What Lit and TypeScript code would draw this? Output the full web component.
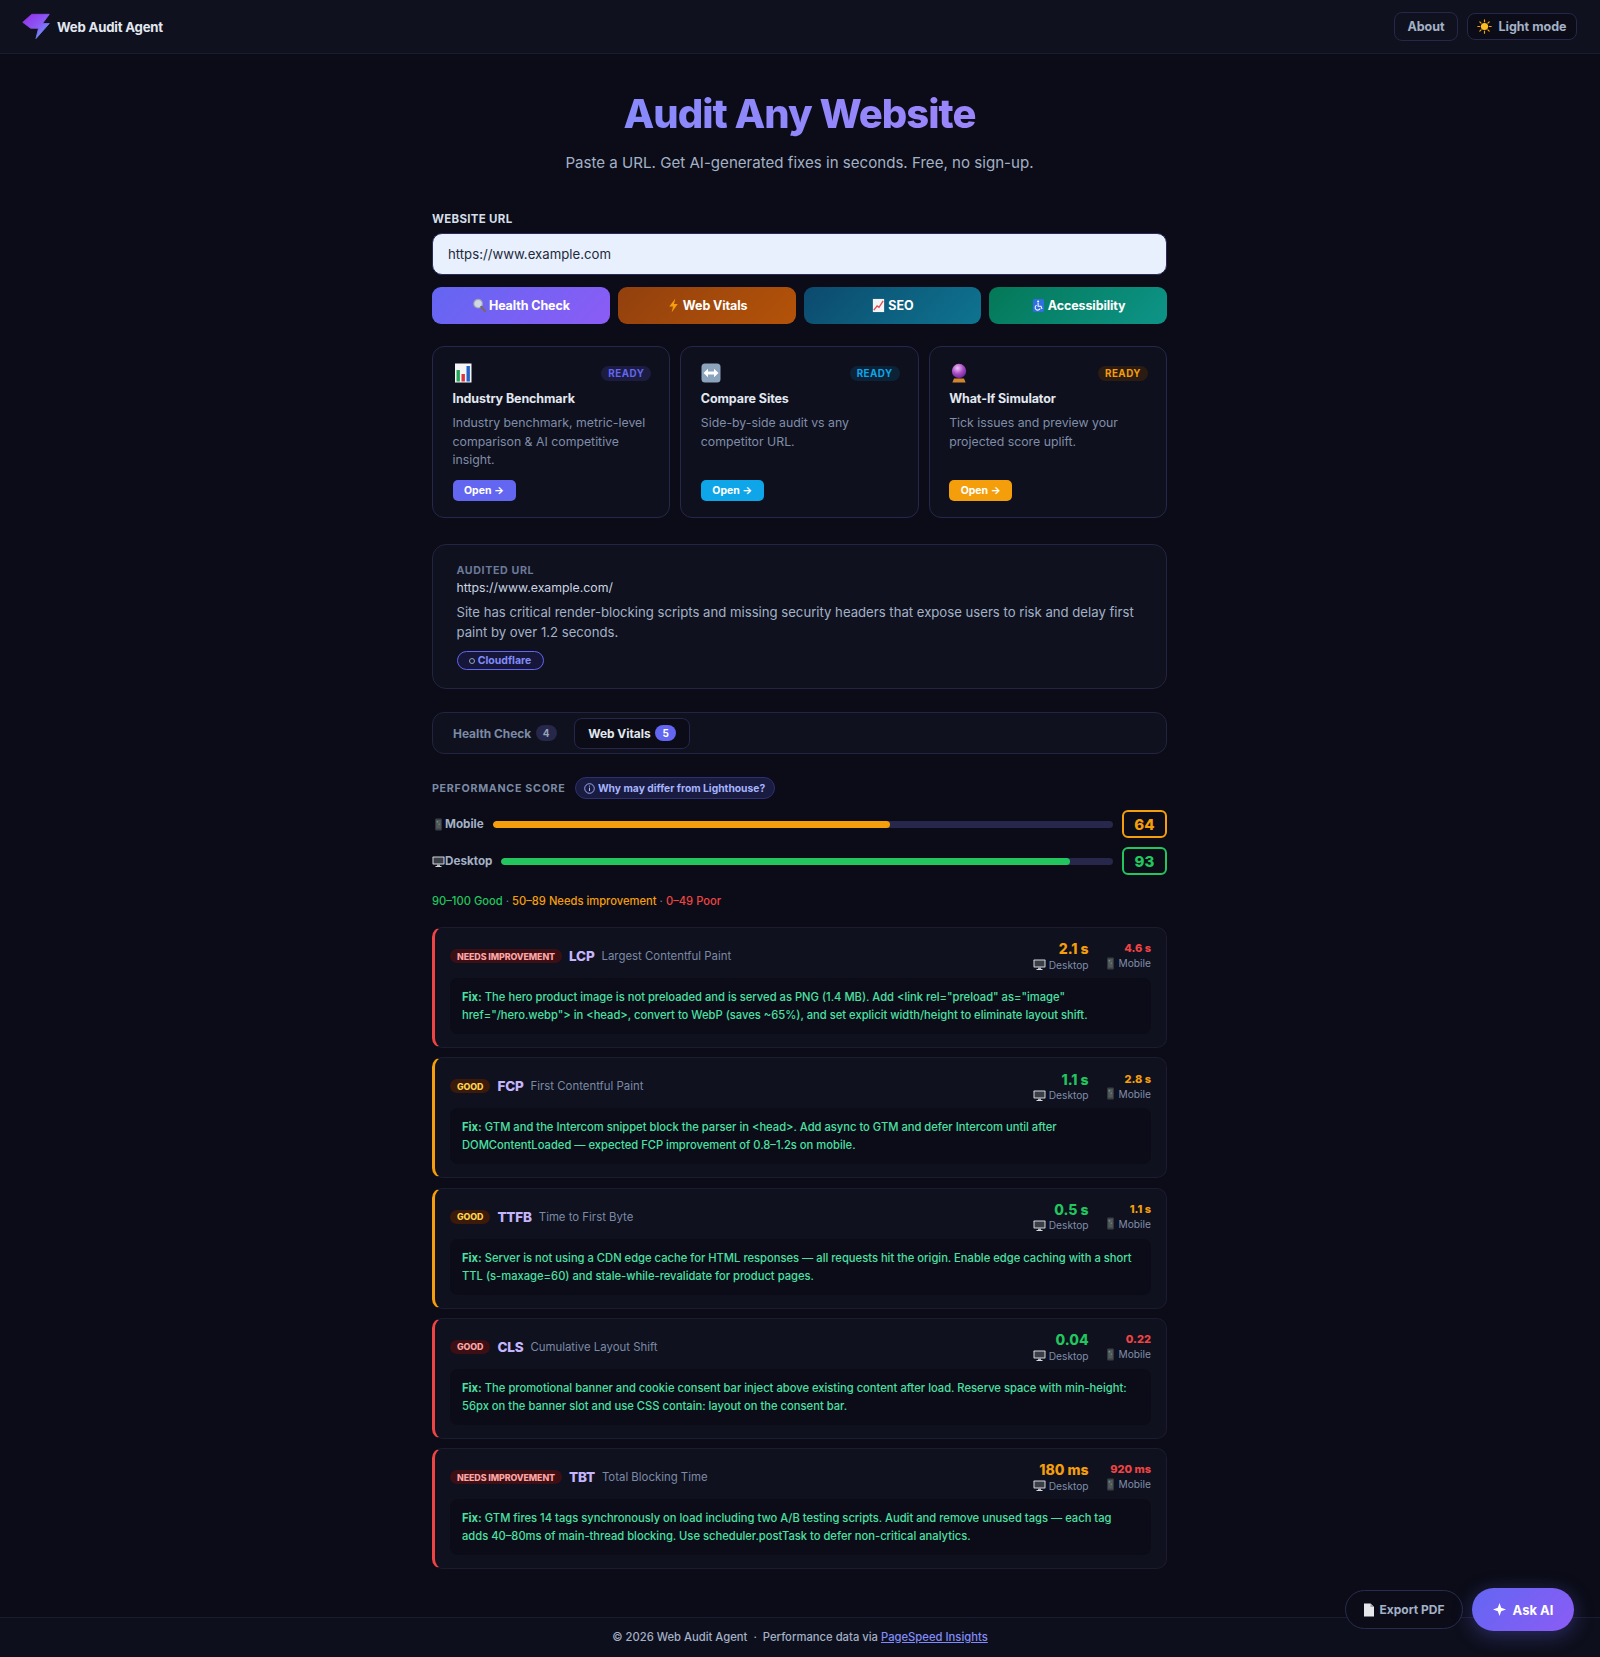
import { LitElement, html, css, svg } from "lit";
import { customElement } from "lit/decorators.js";

const ic = {
  bolt: (s = 15) => html`<svg class="ic" width=${s} height=${s} viewBox="0 0 16 16"><path d="M10 0.5 3.5 9h4L6 15.5 12.5 6.5h-4z" fill="#f59e0b"/></svg>`,
  mag: (s = 15) => html`<svg class="ic" width=${s} height=${s} viewBox="0 0 16 16"><circle cx="6.5" cy="6" r="4.6" fill="#cfd8e3" stroke="#9aa5b1" stroke-width="1.2"/><path d="M10 9.5 14 14" stroke="#7a6a5a" stroke-width="2.4" stroke-linecap="round"/></svg>`,
  trend: (s = 15) => html`<svg class="ic" width=${s} height=${s} viewBox="0 0 16 16"><rect x="2" y="1" width="12" height="14" fill="#f3f4f6"/><path d="M3 13 6.5 8.5 8.5 10 13 3" fill="none" stroke="#e5484d" stroke-width="1.4"/></svg>`,
  wheel: (s = 15) => html`<svg class="ic" width=${s} height=${s} viewBox="0 0 16 16"><rect x="2" y="1" width="12" height="14" rx="2" fill="#2f6fdf"/><circle cx="7.6" cy="3.8" r="1.1" fill="#fff"/><path d="M7.6 5.4v3.4h3l1.2 3" fill="none" stroke="#fff" stroke-width="1.1"/><path d="M6 7.6a2.8 2.8 0 1 0 3.8 3.6" fill="none" stroke="#fff" stroke-width="1.1"/></svg>`,
  bars: () => html`<svg class="ic" width="20" height="20" viewBox="0 0 20 20"><rect x="2" y="0.5" width="16.5" height="19" fill="#f5f5f5"/><rect x="3.5" y="7" width="3.4" height="11.5" fill="#22a559"/><rect x="8.5" y="11" width="3.4" height="7.5" fill="#d9363e"/><rect x="13.5" y="3" width="3.4" height="15.5" fill="#2563c9"/></svg>`,
  swap: () => html`<svg class="ic" width="20" height="20" viewBox="0 0 20 20"><rect x="0.5" y="0.5" width="19" height="19" rx="3.5" fill="#8ba3bb"/><path d="M2.5 10 7 5.8v2.6h6V5.8L17.5 10 13 14.2v-2.6H7v2.6z" fill="#fff"/></svg>`,
  ball: () => html`<svg class="ic" width="20" height="20" viewBox="0 0 20 20"><defs><radialGradient id="bl" cx=".4" cy=".3" r=".8"><stop offset="0" stop-color="#f0c4f5"/><stop offset=".5" stop-color="#a64bc4"/><stop offset="1" stop-color="#5b1d8a"/></radialGradient></defs><circle cx="10" cy="8" r="7.2" fill="url(#bl)"/><path d="M5 15.5h10l1.6 4H3.4z" fill="#d1852c"/></svg>`,
  phone: () => html`<svg class="ic" width="11" height="13" viewBox="0 0 11 13"><rect x="2.2" y="0.5" width="6.6" height="12" rx="1" fill="#3c4043"/><rect x="3.2" y="2" width="4.6" height="8.6" fill="#4e5a5c"/><rect x="3.6" y="3" width="1.5" height="1.5" fill="#6a8f80"/><rect x="5.6" y="5.5" width="1.5" height="1.5" fill="#8a6a6a"/></svg>`,
  desk: () => html`<svg class="ic" width="13" height="13" viewBox="0 0 13 13"><rect x="0.5" y="1.5" width="12" height="8" rx="0.8" fill="#d5d8dc"/><rect x="1.5" y="2.5" width="10" height="6" fill="#3a3f47"/><rect x="5" y="9.5" width="3" height="1.6" fill="#aeb3b9"/><rect x="3.5" y="11" width="6" height="1" fill="#d5d8dc"/></svg>`,
  sun: () => html`<svg class="ic" width="15" height="15" viewBox="0 0 15 15"><g stroke="#f59e0b" stroke-width="1.2" stroke-linecap="round"><path d="M7.5 .8v2M7.5 12.2v2M.8 7.5h2M12.2 7.5h2M2.8 2.8l1.3 1.3M10.9 10.9l1.3 1.3M2.8 12.2l1.3-1.3M10.9 4.1l1.3-1.3"/></g><circle cx="7.5" cy="7.5" r="3.6" fill="#fbbf24"/></svg>`,
  doc: () => html`<svg class="ic" width="12" height="14" viewBox="0 0 12 14"><path d="M1 .5h6.5L11 4v9.5H1z" fill="#e5e7eb"/><path d="M7.5 .5V4H11z" fill="#9ca3af"/></svg>`,
  spark: () => html`<svg class="ic" width="13" height="13" viewBox="0 0 13 13"><path d="M6.5 0 8.2 4.8 13 6.5 8.2 8.2 6.5 13 4.8 8.2 0 6.5 4.8 4.8z" fill="#fff"/></svg>`,
  logo: () => html`<svg width="28" height="27" viewBox="0 0 28 27"><defs><linearGradient id="lg" x1="0.1" y1="0.1" x2="0.9" y2="0.9"><stop offset="0" stop-color="#9333ea"/><stop offset=".55" stop-color="#8b5cf6"/><stop offset="1" stop-color="#60a5fa"/></linearGradient></defs><path d="M9.7 1.3H27.3L20.5 10.5H27.3L14 25.5 16.5 15.3H8.7L.7 9.3Z" fill="url(#lg)" stroke="url(#lg)" stroke-width=".8" stroke-linejoin="round"/></svg>`,
};

type Tone = "red" | "amber" | "green";
interface Metric { pill: string; ptone: Tone; code: string; name: string; d: string; dt: Tone; m: string; mt: Tone; fix: string; }
const metrics: Metric[] = [
  { pill: "NEEDS IMPROVEMENT", ptone: "red", code: "LCP", name: "Largest Contentful Paint", d: "2.1 s", dt: "amber", m: "4.6 s", mt: "red",
    fix: 'The hero product image is not preloaded and is served as PNG (1.4 MB). Add <link rel="preload" as="image" href="/hero.webp"> in <head>, convert to WebP (saves ~65%), and set explicit width/height to eliminate layout shift.' },
  { pill: "GOOD", ptone: "amber", code: "FCP", name: "First Contentful Paint", d: "1.1 s", dt: "green", m: "2.8 s", mt: "amber",
    fix: "GTM and the Intercom snippet block the parser in <head>. Add async to GTM and defer Intercom until after DOMContentLoaded — expected FCP improvement of 0.8–1.2s on mobile." },
  { pill: "GOOD", ptone: "amber", code: "TTFB", name: "Time to First Byte", d: "0.5 s", dt: "green", m: "1.1 s", mt: "amber",
    fix: "Server is not using a CDN edge cache for HTML responses — all requests hit the origin. Enable edge caching with a short TTL (s-maxage=60) and stale-while-revalidate for product pages." },
  { pill: "GOOD", ptone: "red", code: "CLS", name: "Cumulative Layout Shift", d: "0.04", dt: "green", m: "0.22", mt: "red",
    fix: "The promotional banner and cookie consent bar inject above existing content after load. Reserve space with min-height: 56px on the banner slot and use CSS contain: layout on the consent bar." },
  { pill: "NEEDS IMPROVEMENT", ptone: "red", code: "TBT", name: "Total Blocking Time", d: "180 ms", dt: "amber", m: "920 ms", mt: "red",
    fix: "GTM fires 14 tags synchronously on load including two A/B testing scripts. Audit and remove unused tags — each tag adds 40–80ms of main-thread blocking. Use scheduler.postTask to defer non-critical analytics." },
];

const tools = [
  { icon: ic.bars, title: "Industry Benchmark", desc: "Industry benchmark, metric-level comparison & AI competitive insight.", tone: "indigo" },
  { icon: ic.swap, title: "Compare Sites", desc: "Side-by-side audit vs any competitor URL.", tone: "sky" },
  { icon: ic.ball, title: "What-If Simulator", desc: "Tick issues and preview your projected score uplift.", tone: "orange" },
];

@customElement("app-root")
export class AppRoot extends LitElement {
  static styles = css`
    :host { display: block; position: relative; min-height: 1657px; background: #0b0c17; color: #e2e8f0; font-family: Inter, "Liberation Sans", sans-serif; }
    * { box-sizing: border-box; }
    .ic { display: inline-block; vertical-align: -2px; flex: none; }
    header { height: 54px; display: flex; align-items: center; justify-content: space-between; padding: 0 23px 0 22px; background: #10111f; border-bottom: 1px solid #1b1c30; }
    .brand { display: flex; align-items: center; gap: 7px; font-size: 13.2px; font-weight: 700; color: #e2e8f0; letter-spacing: -0.2px; }
    .hbtns { display: flex; align-items: center; gap: 9px; }
    .hbtn { display: flex; align-items: center; justify-content: center; gap: 6px; border: 1px solid #26274a; border-radius: 8px; color: #a3b1c6; font-size: 12.5px; font-weight: 700; background: transparent; }
    .about { height: 29px; width: 64px; }
    .light { height: 27px; width: 110px; background: #0b0c17; }
    .wrap { padding-right: 1px; }
    main { width: 735px; margin: 0 auto; display: flex; flex-direction: column; padding-top: 34px; }
    h1 { margin: 0; text-align: center; font-size: 40px; line-height: 52px; font-weight: 800; letter-spacing: -1px; background: linear-gradient(90deg, #7d8cfb, #a582fb); -webkit-background-clip: text; background-clip: text; color: transparent; }
    .sub { margin: 11px 0 0; text-align: center; font-size: 15.1px; line-height: 24px; color: #a3b1c6; }
    .lab { margin-top: 36px; font-size: 11.5px; line-height: 16px; font-weight: 700; color: #d5dde8; letter-spacing: 0.3px; }
    .url { margin-top: 6px; height: 42px; padding: 0 15px; display: flex; align-items: center; border-radius: 10px; background: #e8f0fe; border: 1.5px solid #2a2b58; color: #1e293b; font-size: 13.2px; }
    .acts { margin-top: 12px; display: grid; grid-template-columns: repeat(4, 1fr); gap: 8px; }
    .act { height: 37px; border-radius: 9px; display: flex; align-items: center; justify-content: center; gap: 2px; color: #fff; font-size: 12.5px; font-weight: 700; letter-spacing: -0.1px; }
    .a1 { background: linear-gradient(135deg, #6366f1, #8b5cf6); }
    .a2 { background: linear-gradient(135deg, #92400e, #b45309); }
    .a3 { background: linear-gradient(135deg, #0c4a6e, #0e7490); }
    .a4 { background: linear-gradient(135deg, #047857, #0d9488); }
    .tools { margin-top: 22px; display: grid; grid-template-columns: repeat(3, 1fr); gap: 10px; }
    .tool { height: 172px; border: 1px solid #26274a; border-radius: 12px; background: #0f101e; padding: 16px 18px 16px 19.5px; display: flex; flex-direction: column; }
    .ttop { display: flex; justify-content: space-between; align-items: center; height: 20px; }
    .ready { font-size: 9.8px; line-height: 15px; font-weight: 700; letter-spacing: .5px; border-radius: 99px; padding: 0 7px; }
    .ready.indigo { color: #6366f1; background: #1b1c40; }
    .ready.sky { color: #0ea5e9; background: #0c2236; }
    .ready.orange { color: #f59e0b; background: #2a1c12; }
    .ttitle { margin-top: 7px; font-size: 12.5px; line-height: 18px; font-weight: 700; color: #e2e8f0; letter-spacing: -0.1px; }
    .tdesc { margin-top: 6px; font-size: 12.3px; line-height: 18.5px; color: #7f8ea8; flex: 1; }
    .open { align-self: flex-start; height: 21px; width: 63px; display: flex; align-items: center; justify-content: center; border-radius: 5px; color: #fff; font-size: 10.5px; font-weight: 700; }
    .open.indigo { background: #6366f1; }
    .open.sky { background: #0ea5e9; }
    .open.orange { background: #f59e0b; }
    .audit { margin-top: 26px; height: 145px; border: 1px solid #23243f; border-radius: 14px; background: #0f111f; padding: 19px 22px 18px 23.5px; }
    .alab { font-size: 10.7px; line-height: 14px; font-weight: 700; color: #6b7a99; letter-spacing: .6px; }
    .aurl { font-size: 12.3px; line-height: 20px; color: #cbd5e1; }
    .asum { margin-top: 4px; font-size: 13.15px; line-height: 20px; color: #a3b1c6; }
    .cf { margin-top: 9px; display: inline-flex; align-items: center; gap: 3px; height: 19px; width: 87px; justify-content: center; border: 1px solid #6366f1; border-radius: 99px; color: #818cf8; font-size: 10.5px; font-weight: 700; background: #15163a; }
    .cf i { width: 6px; height: 6px; border: 1px solid #94a3b8; border-radius: 50%; }
    .tabs { margin-top: 23px; height: 42px; border: 1px solid #23243f; border-radius: 12px; background: #0f111f; display: flex; align-items: center; padding: 0 6px; gap: 3.5px; }
    .tab { height: 31px; display: flex; align-items: center; gap: 4.5px; padding: 0 13px; border-radius: 8px; font-size: 11.9px; font-weight: 700; color: #7b8aa5; border: 1px solid transparent; }
    .tab.on { color: #e2e8f0; background: #0b0c17; border-color: #26274a; }
    .tab b { min-width: 21px; height: 16px; display: flex; align-items: center; justify-content: center; border-radius: 99px; font-size: 10px; background: #26274a; color: #94a3b8; font-weight: 700; }
    .tab.on b { background: #6366f1; color: #fff; }
    .phead { margin-top: 23px; display: flex; align-items: center; gap: 9px; height: 22px; }
    .plab { font-size: 10.7px; font-weight: 700; color: #7b8aa5; letter-spacing: .7px; }
    .why { height: 22px; width: 200px; display: flex; align-items: center; justify-content: center; gap: 2px; border: 1px solid #2e3070; border-radius: 99px; background: #191b40; color: #a5b4fc; font-size: 10.3px; font-weight: 700; }
    .why svg { margin-right: 1px; }
    .score { display: flex; align-items: center; gap: 9px; height: 28px; }
    .score.s1 { margin-top: 11px; }
    .score.s2 { margin-top: 9px; }
    .slab { font-size: 11.7px; font-weight: 700; color: #a3b1c6; display: flex; align-items: center; white-space: nowrap; }
    .slab svg { width: 13px; }
    .track { flex: 1; height: 7px; border-radius: 99px; background: #26274a; overflow: hidden; }
    .fill { height: 100%; border-radius: 99px; }
    .num { width: 45px; height: 28px; display: flex; align-items: center; justify-content: center; border: 2px solid; border-radius: 6px; font-size: 15px; font-weight: 800; background: #0b0c17; }
    .amber { color: #f59e0b; }
    .green { color: #22c55e; }
    .red { color: #ef4444; }
    .bg-amber { background: #f59e0b; }
    .bg-green { background: #22c55e; }
    .legend { margin-top: 17px; font-size: 11.2px; line-height: 18px; font-weight: 500; }
    .legend .sep { color: #64748b; }
    .metrics { margin-top: 17px; display: flex; flex-direction: column; gap: 9.25px; }
    .m { height: 121px; border: 1px solid #1b1c30; border-left: 3px solid; border-radius: 10px; background: #0f111f; padding: 10px 15px 13px 15px; display: flex; flex-direction: column; justify-content: space-between; }
    .m.red { border-left-color: #ef4444; }
    .m.amber { border-left-color: #f59e0b; }
    .mtop { display: flex; align-items: center; justify-content: space-between; height: 36px; }
    .mleft { display: flex; align-items: center; gap: 7px; }
    .pill { height: 14px; min-width: 40px; display: flex; align-items: center; justify-content: center; padding: 0 7px; border-radius: 99px; font-size: 8.9px; font-weight: 800; letter-spacing: -0.1px; }
    .pill.red { background: #3c0f15; color: #fca5a5; }
    .pill.amber { background: #3b1a0c; color: #fcd34d; }
    .code { font-size: 13.5px; font-weight: 800; color: #c4b5fd; letter-spacing: -0.2px; }
    .mname { font-size: 11.4px; color: #7b8aa5; }
    .vals { display: flex; gap: 16px; align-items: flex-start; }
    .v { display: flex; flex-direction: column; align-items: flex-end; }
    .val { font-weight: 800; }
    .vd { font-size: 14px; line-height: 17.5px; }
    .vm { font-size: 11px; line-height: 16px; }
    .vl { display: flex; align-items: center; gap: 3px; font-size: 10.2px; line-height: 14px; color: #7f8ea8; }
    .fix { height: 56px; border-radius: 8px; background: #0b0c17; padding: 10px 14px 10px 12px; font-size: 11.2px; line-height: 18px; color: #4be0a4; font-weight: 500; }
    .fix strong { font-weight: 700; }
    footer { position: absolute; left: 0; right: 0; bottom: 0; height: 40px; padding-bottom: 2px; border-top: 1px solid #1b1c30; background: #0e0f1c; display: flex; align-items: center; justify-content: center; font-size: 11.25px; font-weight: 500; color: #a3b1c6; }
    footer .sp { margin: 0 6px; }
    footer a { color: #818cf8; text-decoration: underline; margin-left: 3px; }
    .float { position: absolute; right: 26px; top: 1588px; display: flex; align-items: center; gap: 9px; }
    .exp { width: 118px; height: 39px; display: flex; align-items: center; justify-content: center; gap: 4px; border: 1px solid #2a2b50; border-radius: 99px; background: #0b0c17; color: #a3b1c6; font-size: 12px; font-weight: 700; }
    .ask { width: 102px; height: 43px; display: flex; align-items: center; justify-content: center; gap: 7px; border-radius: 99px; background: linear-gradient(135deg, #6366f1, #8b5cf6); color: #fff; font-size: 13px; font-weight: 700; box-shadow: 0 4px 20px rgba(99,102,241,.35); }
  `;

  render() {
    return html`
      <header>
        <div class="brand">${ic.logo()}<span>Web Audit Agent</span></div>
        <div class="hbtns">
          <div class="hbtn about">About</div>
          <div class="hbtn light">${ic.sun()}<span>Light mode</span></div>
        </div>
      </header>
      <div class="wrap">
      <main>
        <h1>Audit Any Website</h1>
        <p class="sub">Paste a URL. Get AI-generated fixes in seconds. Free, no sign-up.</p>
        <div class="lab">WEBSITE URL</div>
        <div class="url">https://www.example.com</div>
        <div class="acts">
          <div class="act a1">${ic.mag()}<span>Health Check</span></div>
          <div class="act a2">${ic.bolt()}<span>Web Vitals</span></div>
          <div class="act a3">${ic.trend()}<span>SEO</span></div>
          <div class="act a4">${ic.wheel()}<span>Accessibility</span></div>
        </div>
        <div class="tools">
          ${tools.map((t) => html`
            <div class="tool">
              <div class="ttop">${t.icon()}<span class="ready ${t.tone}">READY</span></div>
              <div class="ttitle">${t.title}</div>
              <div class="tdesc">${t.desc}</div>
              <div class="open ${t.tone}">Open →</div>
            </div>`)}
        </div>
        <section class="audit">
          <div class="alab">AUDITED URL</div>
          <div class="aurl">https://www.example.com/</div>
          <div class="asum">Site has critical render-blocking scripts and missing security headers that expose users to risk and delay first paint by over 1.2 seconds.</div>
          <div class="cf"><i></i>Cloudflare</div>
        </section>
        <div class="tabs">
          <div class="tab">Health Check <b>4</b></div>
          <div class="tab on">Web Vitals <b>5</b></div>
        </div>
        <div class="phead">
          <span class="plab">PERFORMANCE SCORE</span>
          <span class="why"><svg width="11" height="11" viewBox="0 0 11 11"><circle cx="5.5" cy="5.5" r="4.8" fill="none" stroke="#a5b4fc" stroke-width=".9"/>${svg`<path d="M5.5 4.6v3.4M5.5 2.6v1" stroke="#a5b4fc" stroke-width="1"/>`}</svg>Why may differ from Lighthouse?</span>
        </div>
        <div class="score s1">
          <span class="slab">${ic.phone()}Mobile</span>
          <div class="track"><div class="fill bg-amber" style="width:64%"></div></div>
          <div class="num amber">64</div>
        </div>
        <div class="score s2">
          <span class="slab">${ic.desk()}Desktop</span>
          <div class="track"><div class="fill bg-green" style="width:93%"></div></div>
          <div class="num green">93</div>
        </div>
        <div class="legend"><span class="green">90–100 Good</span><span class="sep"> · </span><span class="amber">50–89 Needs improvement</span><span class="sep"> · </span><span class="red">0–49 Poor</span></div>
        <div class="metrics">
          ${metrics.map((m) => html`
            <article class="m ${m.ptone}">
              <div class="mtop">
                <div class="mleft">
                  <span class="pill ${m.ptone}">${m.pill}</span>
                  <span class="code">${m.code}</span>
                  <span class="mname">${m.name}</span>
                </div>
                <div class="vals">
                  <div class="v"><span class="val vd ${m.dt}">${m.d}</span><span class="vl">${ic.desk()}Desktop</span></div>
                  <div class="v"><span class="val vm ${m.mt}">${m.m}</span><span class="vl">${ic.phone()}Mobile</span></div>
                </div>
              </div>
              <div class="fix"><strong>Fix:</strong> ${m.fix}</div>
            </article>`)}
        </div>
      </main>
      </div>
      <footer>© 2026 Web Audit Agent <span class="sp">·</span> Performance data via <a>PageSpeed Insights</a></footer>
      <div class="float">
        <div class="exp">${ic.doc()}<span>Export PDF</span></div>
        <div class="ask">${ic.spark()}<span>Ask AI</span></div>
      </div>
    `;
  }
}
